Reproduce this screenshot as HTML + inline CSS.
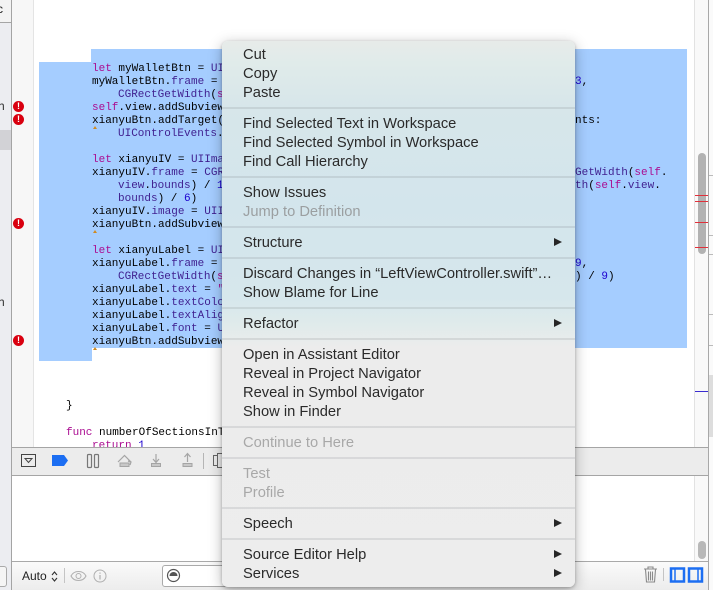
<!DOCTYPE html>
<html><head><meta charset="utf-8">
<style>
html,body{margin:0;padding:0;width:713px;height:590px;overflow:hidden;background:#fff}
.a{position:absolute}
#root{position:relative;width:713px;height:590px;overflow:hidden;font-family:"Liberation Sans",sans-serif;filter:blur(.3px)}
.c{position:absolute;font:11px/13px "Liberation Mono",monospace;color:#000;white-space:pre;height:13px;margin-top:1px}
.k{color:#aa0d91}.t{color:#3f1f8f}.n{color:#1c00cf}
.e{position:absolute;left:13px;width:11px;height:11px;border-radius:50%;background:#d9000f;color:#fff;font:bold 9px/11px "Liberation Sans",sans-serif;text-align:center}
.m{position:absolute;left:21px;font-size:14.7px;line-height:19px;height:19px;color:#2a2a2a;white-space:pre;margin-top:1px}
.d{color:#9b9fa1}
.s{position:absolute;left:0;right:0;height:2px;background:rgba(120,130,135,.18)}
.r{position:absolute;left:332px;width:0;height:0;border-left:8px solid #262626;border-top:4.5px solid transparent;border-bottom:4.5px solid transparent;margin-top:1px}
.car{position:absolute;left:93px;width:0;height:0;border-left:2.5px solid transparent;border-right:2.5px solid transparent;border-bottom:3px solid #d08a20}
.rl{position:absolute;left:695px;width:13px;height:1px;background:#e0303a}
</style></head><body><div id="root">

<!-- sidebar -->
<div class="a" style="left:0;top:0;width:11px;height:590px;background:#ecedf1"></div>
<div class="a" style="left:0;top:0;width:11px;height:22px;background:#f3f3f3;border-bottom:1px solid #a5a5a5"></div>
<div class="a" style="left:0;top:130px;width:11px;height:20px;background:#d2d2d6"></div>
<div class="a" style="left:-3px;top:1px;height:18px;font:12px/16px 'Liberation Sans',sans-serif;color:#222">c</div>
<div class="a" style="left:-2px;top:99px;font:12px/14px 'Liberation Sans',sans-serif;color:#333">h</div>
<div class="a" style="left:-2px;top:295px;font:12px/14px 'Liberation Sans',sans-serif;color:#333">h</div>
<div class="a" style="left:11px;top:0;width:1px;height:590px;background:#a4a4a4"></div>
<!-- gutter -->
<div class="a" style="left:12px;top:0;width:21px;height:447px;background:#f7f7f7;border-right:1px solid #e4e4e4"></div>
<div class="e" style="top:101px">!</div>
<div class="e" style="top:114px">!</div>
<div class="e" style="top:218px">!</div>
<div class="e" style="top:335px">!</div>

<!-- selection -->
<svg class="a" style="left:0;top:0" width="713" height="590"><polygon points="91,49 687,49 687,348 92,348 92,361 39,361 39,62 91,62" fill="#a5cdff"/></svg>

<!-- code -->
<div class="c" style="left:92px;top:62px"><span class="k">let</span> myWalletBtn = <span class="t">UIButton</span></div>
<div class="c" style="left:92px;top:75px">myWalletBtn.<span class="t">frame</span> = <span class="t">CGRect</span></div>
<div class="c" style="left:118px;top:88px"><span class="t">CGRectGetWidth</span>(<span class="k">self</span></div>
<div class="c" style="left:92px;top:101px"><span class="k">self</span>.view.addSubview(</div>
<div class="c" style="left:92px;top:114px">xianyuBtn.addTarget(</div>
<div class="c" style="left:118px;top:127px"><span class="t">UIControlEvents</span>.</div>
<div class="c" style="left:92px;top:153px"><span class="k">let</span> xianyuIV = <span class="t">UIImageV</span></div>
<div class="c" style="left:92px;top:166px">xianyuIV.<span class="t">frame</span> = <span class="t">CGRect</span></div>
<div class="c" style="left:118px;top:179px"><span class="t">view</span>.<span class="t">bounds</span>) / <span class="n">12</span></div>
<div class="c" style="left:118px;top:192px"><span class="t">bounds</span>) / <span class="n">6</span>)</div>
<div class="c" style="left:92px;top:205px">xianyuIV.<span class="t">image</span> = <span class="t">UIIma</span></div>
<div class="c" style="left:92px;top:218px">xianyuBtn.addSubview(</div>
<div class="c" style="left:92px;top:244px"><span class="k">let</span> xianyuLabel = <span class="t">UILa</span></div>
<div class="c" style="left:92px;top:257px">xianyuLabel.<span class="t">frame</span> = <span class="t">CG</span></div>
<div class="c" style="left:118px;top:270px"><span class="t">CGRectGetWidth</span>(<span class="k">self</span></div>
<div class="c" style="left:92px;top:283px">xianyuLabel.<span class="t">text</span> = <span class="k">"</span></div>
<div class="c" style="left:92px;top:296px">xianyuLabel.<span class="t">textColor</span></div>
<div class="c" style="left:92px;top:309px">xianyuLabel.<span class="t">textAlign</span></div>
<div class="c" style="left:92px;top:322px">xianyuLabel.<span class="t">font</span> = <span class="t">UI</span></div>
<div class="c" style="left:92px;top:335px">xianyuBtn.addSubview(</div>
<div class="c" style="left:66px;top:399px">}</div>
<div class="c" style="left:66px;top:426px"><span class="k">func</span> numberOfSectionsInTableView</div>
<div class="c" style="left:92px;top:439px"><span class="k">return</span> <span class="n">1</span></div>
<div class="car" style="top:126px"></div><div class="car" style="top:230px"></div><div class="car" style="top:347px"></div>

<div class="c" style="left:575px;top:75px"><span class="n">3</span>,</div>
<div class="c" style="left:575px;top:114px">nts:</div>
<div class="c" style="left:575px;top:166px"><span class="t">GetWidth</span>(<span class="k">self</span>.</div>
<div class="c" style="left:575px;top:179px"><span class="t">th</span>(<span class="k">self</span>.<span class="t">view</span>.</div>
<div class="c" style="left:575px;top:257px"><span class="n">9</span>,</div>
<div class="c" style="left:575px;top:270px">) / <span class="n">9</span>)</div>

<!-- right strip -->
<div class="a" style="left:694px;top:0;width:14px;height:561px;background:#f9f9f9;border-left:1px solid #e2e2e2;box-sizing:border-box"></div>
<div class="a" style="left:698px;top:153px;width:8px;height:101px;border-radius:4px;background:#b2b2b2"></div>
<div class="rl" style="top:195px"></div>
<div class="rl" style="top:201px"></div>
<div class="rl" style="top:222px"></div>
<div class="rl" style="top:247px"></div>
<div class="rl" style="top:391px;background:#3a2ccf"></div>
<div class="a" style="left:709px;top:0;width:4px;height:590px;background:#fafafa"></div>
<div class="a" style="left:709px;top:175px;width:4px;height:1px;background:#bbb"></div>
<div class="a" style="left:709px;top:235px;width:4px;height:1px;background:#bbb"></div>
<div class="a" style="left:709px;top:254px;width:4px;height:1px;background:#bbb"></div>
<div class="a" style="left:709px;top:314px;width:4px;height:1px;background:#bbb"></div>
<div class="a" style="left:709px;top:345px;width:4px;height:1px;background:#bbb"></div>
<div class="a" style="left:709px;top:375px;width:4px;height:62px;background:#ddd"></div>
<div class="a" style="left:708px;top:0;width:1px;height:590px;background:#a8a8a8"></div>

<!-- debug bar -->
<div class="a" style="left:12px;top:447px;width:696px;height:29px;background:#ececec;border-top:1px solid #a5a5a5;border-bottom:1px solid #a5a5a5;box-sizing:border-box"></div>
<div class="a" style="left:12px;top:476px;width:696px;height:85px;background:#fff"></div>
<div class="a" style="left:694px;top:476px;width:14px;height:85px;background:#f9f9f9;border-left:1px solid #e2e2e2;box-sizing:border-box"></div>
<div class="a" style="left:698px;top:541px;width:8px;height:18px;border-radius:4px;background:#b8b8b8"></div>
<svg class="a" style="left:12px;top:447px" width="220" height="29" fill="none">
 <rect x="9.500" y="7.500" width="14" height="12" stroke="#444" fill="none"/>
 <path d="M13 11.500h7l-3.500 4z" stroke="#444" fill="none"/>
 <path d="M40 8h12l4 5.500-4 5.500H40z" fill="#1c6ef2"/>
 <rect x="75.500" y="7.500" width="4" height="13" rx="1" stroke="#777" stroke-width="1.200"/>
 <rect x="82.500" y="7.500" width="4" height="13" rx="1" stroke="#777" stroke-width="1.200"/>
 <path d="M106 15l6.500-6.500 6.500 6.500M116 14l3 1-1 3" stroke="#a5a5a5" stroke-width="1.200"/>
 <rect x="108" y="16" width="9" height="3.500" fill="#c8c8c8" stroke="#a5a5a5"/>
 <path d="M144 7v8M141 12l3 3.500 3-3.500" stroke="#a5a5a5" stroke-width="1.200"/>
 <rect x="139.500" y="16.500" width="9" height="3" fill="#c8c8c8" stroke="#a5a5a5"/>
 <path d="M175.500 15V7M172.500 10l3-3.500 3 3.500" stroke="#a5a5a5" stroke-width="1.200"/>
 <rect x="171" y="16.500" width="9" height="3" fill="#c8c8c8" stroke="#a5a5a5"/>
 <path d="M191.500 6v16" stroke="#b5b5b5"/>
 <rect x="201.500" y="8.500" width="4" height="10" stroke="#666"/>
 <rect x="205.500" y="6.500" width="7" height="14" stroke="#666"/>
</svg>

<!-- bottom bar -->
<div class="a" style="left:12px;top:561px;width:696px;height:29px;background:linear-gradient(#fafafa,#ececec);border-top:1px solid #a9a9a9;box-sizing:border-box"></div>
<div class="a" style="left:-6px;top:566px;width:11px;height:19px;border:1px solid #aaa;border-radius:3px;background:#f5f5f5"></div>
<div class="a" style="left:22px;top:569px;font:12px/14px 'Liberation Sans',sans-serif;color:#222">Auto</div>
<svg class="a" style="left:50px;top:568px" width="70" height="18" fill="none">
 <path d="M2 7L4.500 4 7 7M2 10l2.500 3 2.500-3" stroke="#333" stroke-width="1.100"/>
 <path d="M14.500 0v15" stroke="#c4c4c4"/>
 <path d="M21 8c3-6 12-6 15 0-3 6-12 6-15 0z" stroke="#b0b0b0" stroke-width="1.100"/>
 <circle cx="28.500" cy="8" r="2.500" stroke="#b0b0b0"/>
 <circle cx="50" cy="8" r="6" stroke="#b0b0b0"/>
 <path d="M50 7v4.500M50 4.500v1.200" stroke="#b0b0b0" stroke-width="1.200"/>
</svg>
<div class="a" style="left:162px;top:565px;width:70px;height:20px;border:1px solid #aaa;border-radius:3px;background:#fff"></div>
<svg class="a" style="left:166px;top:568px" width="16" height="15" fill="none"><circle cx="7.500" cy="7.500" r="6" stroke="#555" stroke-width="1.200"/><path d="M3.500 8a4 4 0 0 1 8 0z" fill="#555"/></svg>
<svg class="a" style="left:642px;top:566px" width="62" height="18" fill="none">
 <path d="M2 3h13M6 3V1h5v2M3.500 3.500l1 12.500h8l1-12.500M6.500 5.500v9M8.500 5.500v9M10.500 5.500v9" stroke="#8a8a8a" stroke-width="1.100"/>
 <path d="M21.500 2v13" stroke="#c4c4c4"/>
 <rect x="29" y="2.500" width="13" height="13" stroke="#1c6ef2" stroke-width="2.500"/>
 <path d="M33 3v12" stroke="#1c6ef2" stroke-width="1.500"/>
 <rect x="47" y="2.500" width="13" height="13" stroke="#1c6ef2" stroke-width="2.500"/>
 <path d="M56 3v12" stroke="#1c6ef2" stroke-width="1.500"/>
</svg>

<!-- menu -->
<div class="a" style="left:222px;top:41px;width:353px;height:546px;border-radius:6px;box-shadow:0 1px 3px rgba(0,0,0,.25),0 3px 14px rgba(0,0,0,.28);background:linear-gradient(#e7ebe9 0,#e0ebea 4%,#d7e6ea 12%,#d3e5ec 30%,#d6e7ec 47%,#e0ebeb 52%,#ececec 56%,#ededed 100%)">
 <div class="m" style="top:4px">Cut</div>
 <div class="m" style="top:23px">Copy</div>
 <div class="m" style="top:42px">Paste</div>
 <div class="s" style="top:66px"></div>
 <div class="m" style="top:73px">Find Selected Text in Workspace</div>
 <div class="m" style="top:92px">Find Selected Symbol in Workspace</div>
 <div class="m" style="top:111px">Find Call Hierarchy</div>
 <div class="s" style="top:135px"></div>
 <div class="m" style="top:142px">Show Issues</div>
 <div class="m d" style="top:161px">Jump to Definition</div>
 <div class="s" style="top:185px"></div>
 <div class="m" style="top:192px">Structure</div><div class="r" style="top:196px"></div>
 <div class="s" style="top:216px"></div>
 <div class="m" style="top:223px">Discard Changes in “LeftViewController.swift”…</div>
 <div class="m" style="top:242px">Show Blame for Line</div>
 <div class="s" style="top:266px"></div>
 <div class="m" style="top:273px">Refactor</div><div class="r" style="top:277px"></div>
 <div class="s" style="top:297px"></div>
 <div class="m" style="top:304px">Open in Assistant Editor</div>
 <div class="m" style="top:323px">Reveal in Project Navigator</div>
 <div class="m" style="top:342px">Reveal in Symbol Navigator</div>
 <div class="m" style="top:361px">Show in Finder</div>
 <div class="s" style="top:385px"></div>
 <div class="m d" style="top:392px;color:#a8a8a8">Continue to Here</div>
 <div class="s" style="top:416px"></div>
 <div class="m d" style="top:423px;color:#a8a8a8">Test</div>
 <div class="m d" style="top:442px;color:#a8a8a8">Profile</div>
 <div class="s" style="top:466px"></div>
 <div class="m" style="top:473px">Speech</div><div class="r" style="top:477px"></div>
 <div class="s" style="top:497px"></div>
 <div class="m" style="top:504px">Source Editor Help</div><div class="r" style="top:508px"></div>
 <div class="m" style="top:523px">Services</div><div class="r" style="top:527px"></div>
</div>
</div></body></html>
